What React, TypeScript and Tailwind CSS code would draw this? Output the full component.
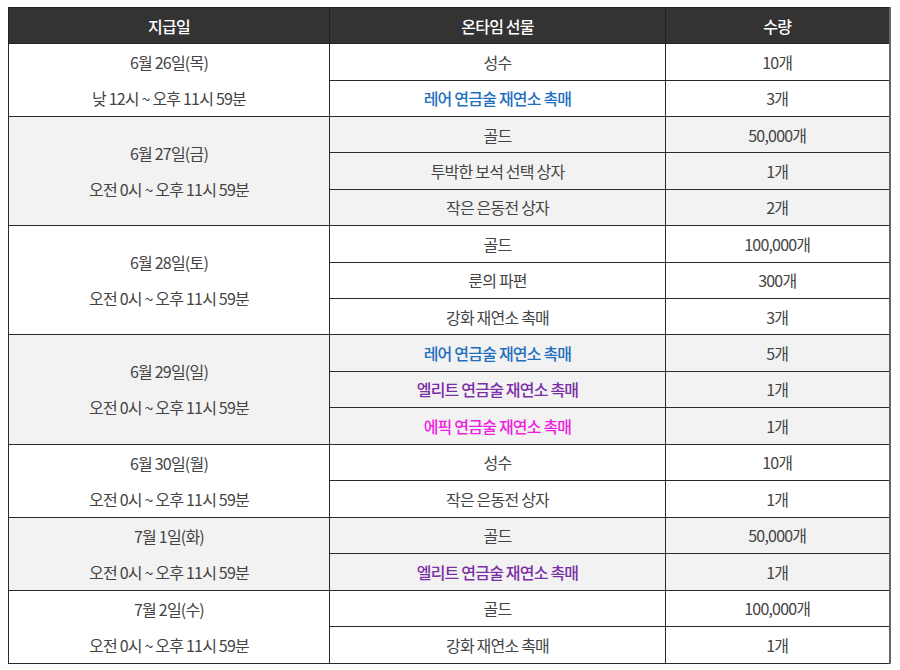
const BLUE = 'text-[#1f6fbf] font-medium';
const PURPLE = 'text-[#7b2fa6] font-medium';
const PINK = 'text-[#f01ee0] font-medium';

type Gift = { name: string; qty: string; tone?: string };
type Day = { date: string; time: string; gifts: Gift[] };

const days: Day[] = [
    {
        date: '6월 26일(목)',
        time: '낮 12시 ~ 오후 11시 59분',
        gifts: [
            { name: '성수', qty: '10개' },
            { name: '레어 연금술 재연소 촉매', qty: '3개', tone: BLUE },
        ],
    },
    {
        date: '6월 27일(금)',
        time: '오전 0시 ~ 오후 11시 59분',
        gifts: [
            { name: '골드', qty: '50,000개' },
            { name: '투박한 보석 선택 상자', qty: '1개' },
            { name: '작은 은동전 상자', qty: '2개' },
        ],
    },
    {
        date: '6월 28일(토)',
        time: '오전 0시 ~ 오후 11시 59분',
        gifts: [
            { name: '골드', qty: '100,000개' },
            { name: '룬의 파편', qty: '300개' },
            { name: '강화 재연소 촉매', qty: '3개' },
        ],
    },
    {
        date: '6월 29일(일)',
        time: '오전 0시 ~ 오후 11시 59분',
        gifts: [
            { name: '레어 연금술 재연소 촉매', qty: '5개', tone: BLUE },
            { name: '엘리트 연금술 재연소 촉매', qty: '1개', tone: PURPLE },
            { name: '에픽 연금술 재연소 촉매', qty: '1개', tone: PINK },
        ],
    },
    {
        date: '6월 30일(월)',
        time: '오전 0시 ~ 오후 11시 59분',
        gifts: [
            { name: '성수', qty: '10개' },
            { name: '작은 은동전 상자', qty: '1개' },
        ],
    },
    {
        date: '7월 1일(화)',
        time: '오전 0시 ~ 오후 11시 59분',
        gifts: [
            { name: '골드', qty: '50,000개' },
            { name: '엘리트 연금술 재연소 촉매', qty: '1개', tone: PURPLE },
        ],
    },
    {
        date: '7월 2일(수)',
        time: '오전 0시 ~ 오후 11시 59분',
        gifts: [
            { name: '골드', qty: '100,000개' },
            { name: '강화 재연소 촉매', qty: '1개' },
        ],
    },
];

const cell = 'border border-[#2a2a2a] text-center align-middle p-0';

const App = () => {
    return (
        <div className="bg-white w-[900px] h-[670px] pt-[7px] pl-[8px] font-['Noto_Sans_CJK_KR','Noto_Sans',sans-serif] text-[16px] tracking-[-0.8px] text-[#444]">
            <table className="w-[881px] border-collapse table-fixed border-r-2 border-r-[#666]">
                <colgroup>
                    <col className="w-[321px]" />
                    <col className="w-[336px]" />
                    <col className="w-[224px]" />
                </colgroup>
                <thead>
                    <tr className="h-[36px] bg-[#333333] text-white text-[16px]">
                        <th className="border border-[#222] font-medium">지급일</th>
                        <th className="border border-[#222] font-medium">온타임 선물</th>
                        <th className="border border-[#222] font-medium">수량</th>
                    </tr>
                </thead>
                <tbody>
                    {days.map((day, dayIndex) =>
                        day.gifts.map((gift, index) => (
                            <tr
                                key={`${dayIndex}-${index}`}
                                className={`h-[36.4px] ${dayIndex % 2 === 1 ? 'bg-[#f2f2f2]' : 'bg-white'}`}
                            >
                                {index === 0 && (
                                    <td className={`${cell} leading-[36px]`} rowSpan={day.gifts.length}>
                                        <div>{day.date}</div>
                                        <div>{day.time}</div>
                                    </td>
                                )}
                                <td className={`${cell} ${gift.tone ?? ''}`}>{gift.name}</td>
                                <td className={cell}>{gift.qty}</td>
                            </tr>
                        ))
                    )}
                </tbody>
            </table>
        </div>
    );
};

export default App;
